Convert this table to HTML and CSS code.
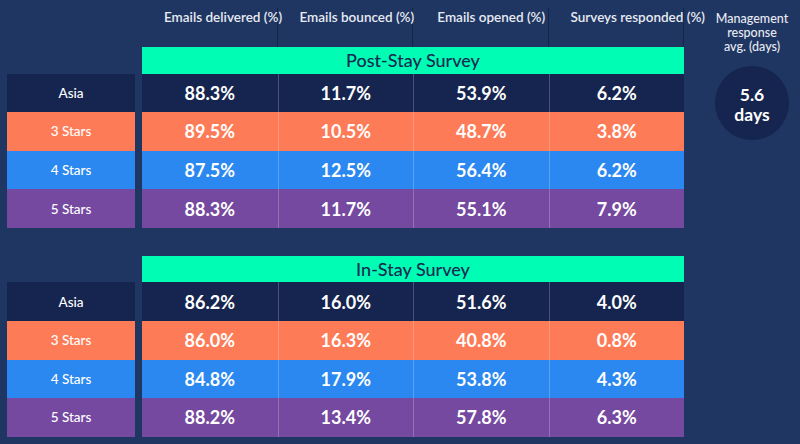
FILE: index.html
```html
<!DOCTYPE html>
<html>
<head>
<meta charset="utf-8">
<link rel="stylesheet" href="styles.css">
</head>
<body>
<div class="page">
  <div class="main">
    <div class="head-row">
      <div class="head-cell">Emails delivered (%)</div>
      <div class="head-cell">Emails bounced (%)</div>
      <div class="head-cell">Emails opened (%)</div>
      <div class="head-cell">Surveys responded (%)</div>
    </div>

    <section class="survey">
      <div class="title">Post-Stay Survey</div>
      <div class="body">
        <div class="row r-asia"><div class="label">Asia</div><div class="vals"><div class="v">88.3%</div><div class="v">11.7%</div><div class="v">53.9%</div><div class="v">6.2%</div></div></div>
        <div class="row r-3"><div class="label">3 Stars</div><div class="vals"><div class="v">89.5%</div><div class="v">10.5%</div><div class="v">48.7%</div><div class="v">3.8%</div></div></div>
        <div class="row r-4"><div class="label">4 Stars</div><div class="vals"><div class="v">87.5%</div><div class="v">12.5%</div><div class="v">56.4%</div><div class="v">6.2%</div></div></div>
        <div class="row r-5"><div class="label">5 Stars</div><div class="vals"><div class="v">88.3%</div><div class="v">11.7%</div><div class="v">55.1%</div><div class="v">7.9%</div></div></div>
      </div>
    </section>

    <section class="survey second">
      <div class="title">In-Stay Survey</div>
      <div class="body">
        <div class="row r-asia"><div class="label">Asia</div><div class="vals"><div class="v">86.2%</div><div class="v">16.0%</div><div class="v">51.6%</div><div class="v">4.0%</div></div></div>
        <div class="row r-3"><div class="label">3 Stars</div><div class="vals"><div class="v">86.0%</div><div class="v">16.3%</div><div class="v">40.8%</div><div class="v">0.8%</div></div></div>
        <div class="row r-4"><div class="label">4 Stars</div><div class="vals"><div class="v">84.8%</div><div class="v">17.9%</div><div class="v">53.8%</div><div class="v">4.3%</div></div></div>
        <div class="row r-5"><div class="label">5 Stars</div><div class="vals"><div class="v">88.2%</div><div class="v">13.4%</div><div class="v">57.8%</div><div class="v">6.3%</div></div></div>
      </div>
    </section>
  </div>

  <aside class="side">
    <div class="side-head">Management<br>response<br>avg. (days)</div>
    <div class="circle"><span>5.6</span><span>days</span></div>
  </aside>
</div>
</body>
</html>
```

FILE: styles.css
```css
html, body {
  margin: 0;
  padding: 0;
  background: #1f3562;
}
body {
  font-family: Lato, "Open Sans", "Liberation Sans", sans-serif;
  color: #ffffff;
  width: 800px;
  height: 444px;
  overflow: hidden;
}
.page {
  display: flex;
  width: 800px;
  height: 444px;
}
.main {
  width: 684px;
  display: flex;
  flex-direction: column;
}
.head-row {
  display: flex;
  margin-left: 142px;
  height: 47px;
}
.head-cell {
  width: 135.5px;
  margin-top: 8px;
  height: 39px;
  box-sizing: border-box;
  border-right: 1px solid #142549;
  padding-left: 22px;
  padding-top: 1px;
  text-align: center;
  font-size: 13.5px;
  font-weight: 600;
  color: #e8ebf2;
  white-space: nowrap;
  line-height: 17px;
}
.survey {
  display: flex;
  flex-direction: column;
}
.second {
  margin-top: 28px;
}
.title {
  margin-left: 142px;
  height: 26.5px;
  background: #00fdb4;
  color: #172a52;
  font-size: 18px;
  font-weight: 500;
  text-align: center;
  line-height: 27px;
}
.body {
  display: flex;
  flex-direction: column;
}
.row {
  display: flex;
  height: 38.6px;
  gap: 7px;
  padding-left: 7px;
}
.label {
  width: 128px;
  display: flex;
  align-items: center;
  justify-content: center;
  font-size: 13.5px;
  font-weight: 500;
}
.vals {
  display: flex;
  width: 542px;
}
.v {
  width: 135.5px;
  display: flex;
  align-items: center;
  justify-content: center;
  font-size: 18px;
  font-weight: 700;
  box-sizing: border-box;
  border-left: 1px solid rgba(255, 255, 255, 0.22);
}
.v:first-child {
  border-left: none;
}
.r-asia .label, .r-asia .vals { background: #15254f; }
.r-3 .label, .r-3 .vals { background: #fe7b58; }
.r-4 .label, .r-4 .vals { background: #2b88f0; }
.r-5 .label, .r-5 .vals { background: #7549a0; }

.side {
  flex: 1;
  display: flex;
  flex-direction: column;
  align-items: center;
  padding-left: 20px;
}
.side-head {
  margin-top: 12px;
  font-size: 12.5px;
  font-weight: 500;
  line-height: 14px;
  text-align: center;
  color: #e8ebf2;
}
.circle {
  margin-top: 12px;
  width: 74px;
  height: 74px;
  box-sizing: border-box;
  padding-top: 3px;
  border-radius: 50%;
  background: #15254f;
  display: flex;
  flex-direction: column;
  align-items: center;
  justify-content: center;
  font-size: 17.5px;
  font-weight: 700;
  line-height: 20px;
}
```
